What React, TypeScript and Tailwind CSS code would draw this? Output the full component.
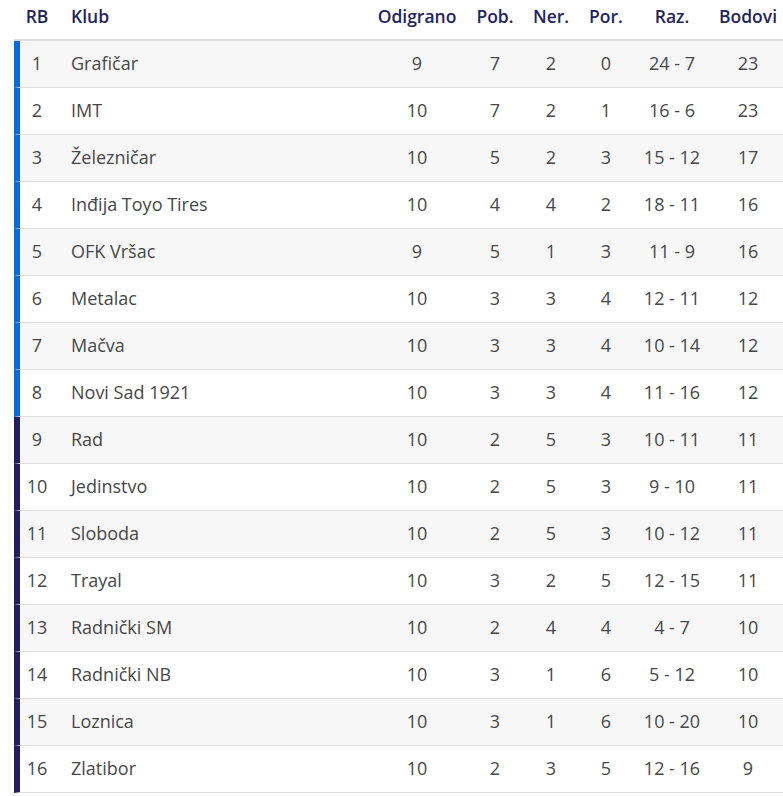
const rows: [number, string, number, number, number, number, string, number][] = [
  [1, "Grafičar", 9, 7, 2, 0, "24 - 7", 23],
  [2, "IMT", 10, 7, 2, 1, "16 - 6", 23],
  [3, "Železničar", 10, 5, 2, 3, "15 - 12", 17],
  [4, "Inđija Toyo Tires", 10, 4, 4, 2, "18 - 11", 16],
  [5, "OFK Vršac", 9, 5, 1, 3, "11 - 9", 16],
  [6, "Metalac", 10, 3, 3, 4, "12 - 11", 12],
  [7, "Mačva", 10, 3, 3, 4, "10 - 14", 12],
  [8, "Novi Sad 1921", 10, 3, 3, 4, "11 - 16", 12],
  [9, "Rad", 10, 2, 5, 3, "10 - 11", 11],
  [10, "Jedinstvo", 10, 2, 5, 3, "9 - 10", 11],
  [11, "Sloboda", 10, 2, 5, 3, "10 - 12", 11],
  [12, "Trayal", 10, 3, 2, 5, "12 - 15", 11],
  [13, "Radnički SM", 10, 2, 4, 4, "4 - 7", 10],
  [14, "Radnički NB", 10, 3, 1, 6, "5 - 12", 10],
  [15, "Loznica", 10, 3, 1, 6, "10 - 20", 10],
  [16, "Zlatibor", 10, 2, 3, 5, "12 - 16", 9],
];

const cols = ["w-[318px]", "w-[90px]", "w-[66px]", "w-[46px]", "w-[64px]", "w-[68px]", "w-[84px]"];

export default function App() {
  return (
    <div className="w-[783px] h-[796px] overflow-hidden bg-white pl-[14px] font-['Open_Sans',sans-serif]">
      <div className="w-[790px]">
        <div className="flex h-[41px] items-center border-b-2 border-[#dedede] text-[17.5px] font-semibold text-[#25245a] pb-[6px]">
          <div className="w-[40px] pl-[6px] text-center">RB</div>
          <div className={`${cols[0]} pl-[17px]`}>Klub</div>
          <div className={`${cols[1]} text-center`}>Odigrano</div>
          <div className={`${cols[2]} text-center`}>Pob.</div>
          <div className={`${cols[3]} text-center`}>Ner.</div>
          <div className={`${cols[4]} text-center`}>Por.</div>
          <div className={`${cols[5]} text-center`}>Raz.</div>
          <div className={`${cols[6]} text-center`}>Bodovi</div>
        </div>
        {rows.map((r, i) => (
          <div
            key={r[0]}
            className={`flex h-[47px] items-center border-b border-[#dedede] border-l-[6px] pb-[2px] text-[18px] text-[#474747] ${
              r[0] <= 8 ? "border-l-[#0a6bd2]" : "border-l-[#221d5e]"
            } ${i % 2 === 0 ? "bg-[#f7f7f7]" : "bg-white"}`}
          >
            <div className="w-[34px] text-center">{r[0]}</div>
            <div className={`${cols[0]} pl-[17px]`}>{r[1]}</div>
            <div className={`${cols[1]} text-center`}>{r[2]}</div>
            <div className={`${cols[2]} text-center`}>{r[3]}</div>
            <div className={`${cols[3]} text-center`}>{r[4]}</div>
            <div className={`${cols[4]} text-center`}>{r[5]}</div>
            <div className={`${cols[5]} text-center`}>{r[6]}</div>
            <div className={`${cols[6]} text-center`}>{r[7]}</div>
          </div>
        ))}
      </div>
    </div>
  );
}
